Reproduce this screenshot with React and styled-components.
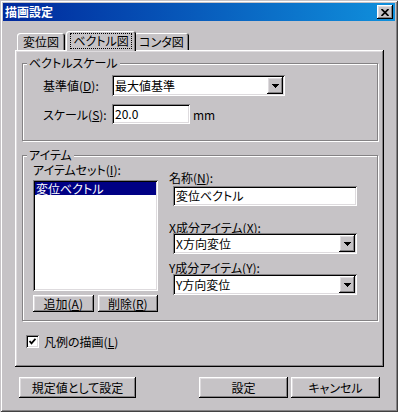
import React from "react";
import styled, { createGlobalStyle } from "styled-components";

const face = "#c6c3c6";
const shade = "#848284";
const light = "#dedbde";

const raised = `
  box-shadow: inset -1px -1px 0 #000, inset 1px 1px 0 #fff,
    inset -2px -2px 0 ${shade}, inset 2px 2px 0 ${light};
`;
const sunken = `
  box-shadow: inset 1px 1px 0 ${shade}, inset -1px -1px 0 #fff,
    inset 2px 2px 0 #000, inset -2px -2px 0 ${light};
`;

const GlobalStyle = createGlobalStyle`
  html, body {
    margin: 0;
    padding: 0;
    background: ${face};
  }
  body {
    font-family: "Noto Sans CJK JP", "Noto Sans", sans-serif;
    font-size: 12px;
    font-feature-settings: "palt";
    color: #000;
  }
  * {
    box-sizing: border-box;
  }
`;

const Window = styled.div`
  width: 398px;
  height: 412px;
  padding: 3px;
  display: flex;
  flex-direction: column;
  background: ${face};
  box-shadow: inset 1px 1px 0 ${face}, inset -1px -1px 0 #424142,
    inset 2px 2px 0 #fff, inset -2px -2px 0 ${shade};
`;

const TitleBar = styled.div`
  height: 18px;
  display: flex;
  align-items: center;
  justify-content: space-between;
  padding: 0 2px 0 2px;
  background: linear-gradient(to right, #00289c, #1090dc);
`;

const TitleText = styled.span`
  color: #fff;
  font-weight: bold;
  line-height: 18px;
`;

const CloseButton = styled.div`
  width: 16px;
  height: 14px;
  display: flex;
  align-items: center;
  justify-content: center;
  background: ${face};
  ${raised}
`;

const Content = styled.div`
  padding: 10px 11px 0 12px;
  display: flex;
  flex-direction: column;
`;

const TabRow = styled.div`
  height: 20px;
  display: flex;
  align-items: flex-end;
  padding-left: 2px;
`;

const Tab = styled.div`
  position: relative;
  width: ${(p) => p.$w}px;
  height: ${(p) => (p.$active ? 20 : 17)}px;
  margin: ${(p) => (p.$active ? "0 -2px 0 1px" : "0 0 1px 0")};
  z-index: ${(p) => (p.$active ? 2 : 1)};
  display: flex;
  align-items: center;
  justify-content: center;
  background: ${face};
  border-radius: 3px 3px 0 0;
  box-shadow: inset 1px 1px 0 #fff, inset -1px 0 0 #000,
    inset -2px 0 0 ${shade};
  padding-bottom: ${(p) => (p.$active ? 1 : 0)}px;
`;

const Focus = styled.span`
  outline: 1px dotted #000;
  padding: 0 2px;
  line-height: 14px;
`;

const Panel = styled.div`
  margin-top: -1px;
  height: 317px;
  padding: 13px 6px 0 7px;
  display: flex;
  flex-direction: column;
  background: ${face};
  ${raised}
`;

const Group = styled.div`
  height: ${(p) => p.$h}px;
  margin-top: ${(p) => p.$mt || 0}px;
  border: 1px solid ${shade};
  box-shadow: inset 1px 1px 0 #fff, 1px 1px 0 #fff;
  display: flex;
  flex-direction: column;
`;

const Caption = styled.span`
  align-self: flex-start;
  margin: -8px 0 0 4px;
  padding: 0 2px;
  line-height: 14px;
  background: ${face};
`;

const ScaleBody = styled.div`
  padding: 5px 0 0 20px;
  display: flex;
  flex-direction: column;
  gap: 8px;
`;

const FormRow = styled.div`
  display: flex;
  align-items: center;
`;

const RowLabel = styled.span`
  width: 69px;
  white-space: nowrap;
`;

const Key = styled.span`
  text-decoration: underline;
`;

const Field = styled.div`
  width: ${(p) => p.$w}px;
  height: ${(p) => p.$h || 20}px;
  margin-left: ${(p) => p.$ml || 0}px;
  padding: 2px 2px 2px 3px;
  display: flex;
  align-items: center;
  background: #fff;
  line-height: 14px;
  white-space: nowrap;
  ${sunken}
`;

const FieldText = styled.span`
  flex: 1;
`;

const ArrowButton = styled.div`
  width: 16px;
  height: 17px;
  display: flex;
  align-items: center;
  justify-content: center;
  background: ${face};
  ${raised}
`;

const Unit = styled.span`
  margin-left: 3px;
`;

const ItemBody = styled.div`
  padding: 2px 0 0 10px;
  display: flex;
  gap: 11px;
`;

const LeftColumn = styled.div`
  width: 125px;
  display: flex;
  flex-direction: column;
`;

const RightColumn = styled.div`
  width: 188px;
  padding-top: 8px;
  display: flex;
  flex-direction: column;
`;

const SmallLabel = styled.span`
  line-height: 12px;
  height: 12px;
  margin-bottom: ${(p) => p.$mb || 0}px;
  margin-top: ${(p) => p.$mt || 0}px;
  white-space: nowrap;
`;

const ListBox = styled.div`
  height: 111px;
  margin-top: 4px;
  padding: 2px;
  background: #fff;
  ${sunken}
`;

const ListItem = styled.div`
  height: 13px;
  line-height: 13px;
  padding-left: 1px;
  background: ${(p) => (p.$selected ? "#000084" : "transparent")};
  color: ${(p) => (p.$selected ? "#fff" : "#000")};
`;

const SmallButtons = styled.div`
  margin-top: 4px;
  display: flex;
  gap: 4px;
`;

const Button = styled.button`
  width: ${(p) => (p.$w ? `${p.$w}px` : "auto")};
  flex: ${(p) => (p.$w ? "none" : 1)};
  height: ${(p) => p.$h || 21}px;
  margin-left: ${(p) => (p.$push ? "auto" : "0")};
  padding: 0;
  border: none;
  background: ${face};
  font: inherit;
  font-feature-settings: "palt";
  color: #000;
  line-height: 14px;
  ${raised}
`;

const CheckRow = styled.div`
  margin: 12px 0 0 4px;
  display: flex;
  align-items: center;
  gap: 5px;
`;

const CheckBox = styled.div`
  width: 13px;
  height: 13px;
  display: flex;
  align-items: center;
  justify-content: center;
  background: #fff;
  ${sunken}
`;

const ButtonRow = styled.div`
  margin-top: 10px;
  padding: 0 15px 0 16px;
  display: flex;
  gap: 3px;
`;

function DownArrow() {
  return (
    <svg width="7" height="4" viewBox="0 0 7 4" shapeRendering="crispEdges">
      <polygon points="0,0 7,0 3.5,4" fill="#000" />
    </svg>
  );
}

function Combo({ width, children }) {
  return (
    <Field $w={width} $h={21} $ml={4}>
      <FieldText>{children}</FieldText>
      <ArrowButton>
        <DownArrow />
      </ArrowButton>
    </Field>
  );
}

export default function App() {
  return (
    <>
      <GlobalStyle />
      <Window>
        <TitleBar>
          <TitleText>描画設定</TitleText>
          <CloseButton>
            <svg width="8" height="7" viewBox="0 0 8 7">
              <path d="M0.5 0 L7.5 7 M7.5 0 L0.5 7" stroke="#000" strokeWidth="1.7" />
            </svg>
          </CloseButton>
        </TitleBar>
        <Content>
          <TabRow>
            <Tab $w={48}>変位図</Tab>
            <Tab $w={70} $active>
              <Focus>ベクトル図</Focus>
            </Tab>
            <Tab $w={55}>コンタ図</Tab>
          </TabRow>
          <Panel>
            <Group $h={78}>
              <Caption>ベクトルスケール</Caption>
              <ScaleBody>
                <FormRow>
                  <RowLabel>
                    基準値(<Key>D</Key>):
                  </RowLabel>
                  <Field $w={173} $h={21}>
                    <FieldText>最大値基準</FieldText>
                    <ArrowButton>
                      <DownArrow />
                    </ArrowButton>
                  </Field>
                </FormRow>
                <FormRow>
                  <RowLabel>
                    スケール(<Key>S</Key>):
                  </RowLabel>
                  <Field $w={78} $h={20}>
                    <FieldText>20.0</FieldText>
                  </Field>
                  <Unit>mm</Unit>
                </FormRow>
              </ScaleBody>
            </Group>
            <Group $h={166} $mt={14}>
              <Caption>アイテム</Caption>
              <ItemBody>
                <LeftColumn>
                  <SmallLabel>
                    アイテムセット(<Key>I</Key>):
                  </SmallLabel>
                  <ListBox>
                    <ListItem $selected>変位ベクトル</ListItem>
                  </ListBox>
                  <SmallButtons>
                    <Button $h={17}>
                      追加(<Key>A</Key>)
                    </Button>
                    <Button $h={17}>
                      削除(<Key>R</Key>)
                    </Button>
                  </SmallButtons>
                </LeftColumn>
                <RightColumn>
                  <SmallLabel $mb={2}>
                    名称(<Key>N</Key>):
                  </SmallLabel>
                  <Field $w={184} $h={20} $ml={4}>
                    <FieldText>変位ベクトル</FieldText>
                  </Field>
                  <SmallLabel $mt={16} $mb={-1}>
                    X成分アイテム(<Key>X</Key>):
                  </SmallLabel>
                  <Combo width={184}>X方向変位</Combo>
                  <SmallLabel $mt={8}>
                    Y成分アイテム(<Key>Y</Key>):
                  </SmallLabel>
                  <Combo width={184}>Y方向変位</Combo>
                </RightColumn>
              </ItemBody>
            </Group>
            <CheckRow>
              <CheckBox>
                <svg width="7" height="7" viewBox="0 0 7 7">
                  <path d="M0.5 3 L2.5 5.3 L6.5 0.8" stroke="#000" strokeWidth="1.8" fill="none" />
                </svg>
              </CheckBox>
              <span>
                凡例の描画(<Key>L</Key>)
              </span>
            </CheckRow>
          </Panel>
        </Content>
        <ButtonRow>
          <Button $w={117}>規定値として設定</Button>
          <Button $w={89} $push>
            設定
          </Button>
          <Button $w={89}>キャンセル</Button>
        </ButtonRow>
      </Window>
    </>
  );
}
